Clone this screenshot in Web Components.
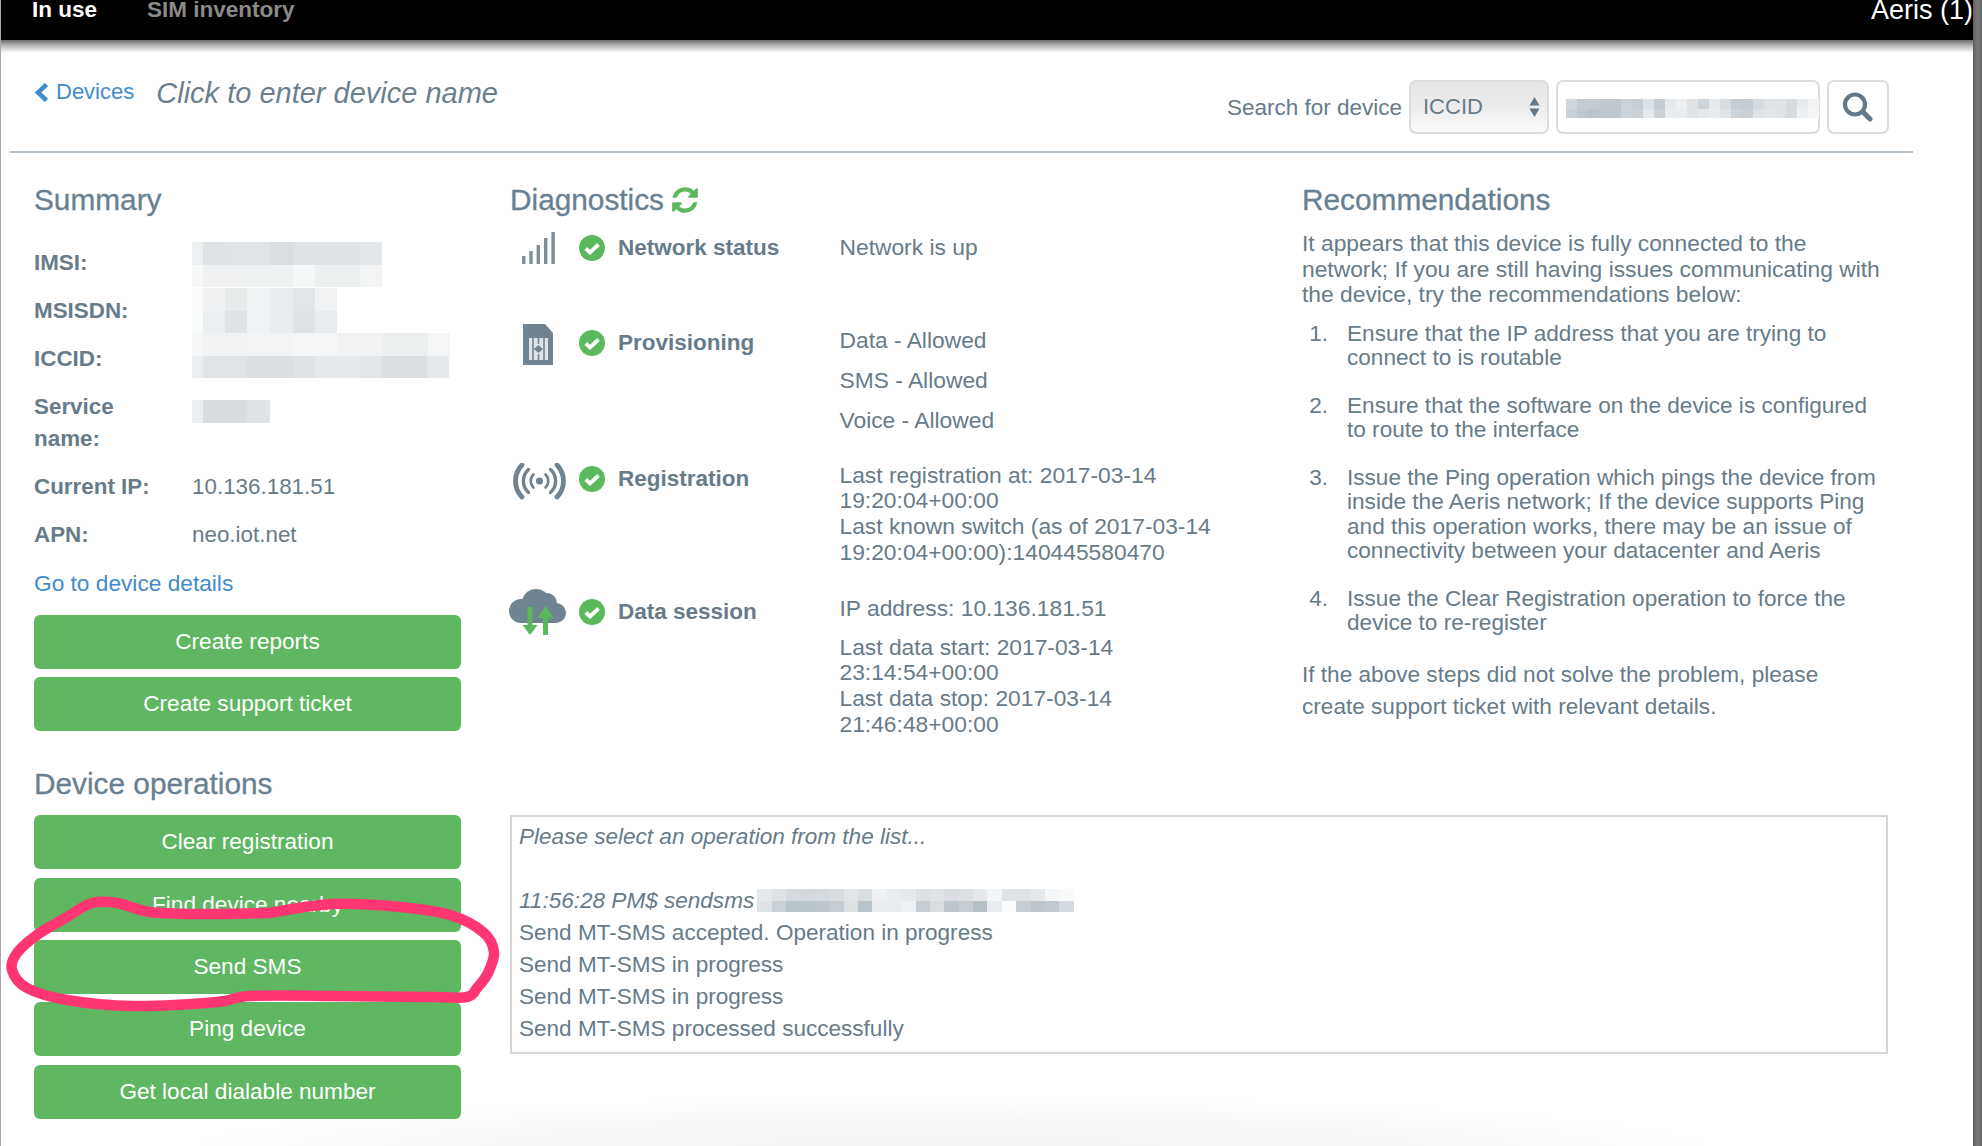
<!DOCTYPE html>
<html>
<head>
<meta charset="utf-8">
<title>Device diagnostics</title>
<style>
  html, body { margin: 0; height: 1146px; overflow: hidden; background: #fff; }
  body { font: 22.600px/32px "Liberation Sans", Arial, sans-serif; color: #677b89; }
</style>
</head>
<body>
<device-page>
  <top-nav slot="nav">
    <span slot="active">In use</span>
    <span slot="link">SIM inventory</span>
    <span slot="account">Aeris (1)</span>
  </top-nav>

  <device-header slot="header"></device-header>

  <summary-panel slot="left">
    <info-row><span slot="label">IMSI:</span><pixel-blur top="-5" h="22.7" data="11:edf0f1 22:dde2e4 45:e0e4e6 23:d9dfe1 67:dfe3e5 22:e4e7e9|11:f7f8f9 44:eef0f1 46:eef1f2 22:f6f7f8 45:eceff0 22:f2f4f5"></pixel-blur></info-row>
    <info-row><span slot="label">MSISDN:</span><pixel-blur top="-7" h="22.5" data="11:fafbfb 22:eef0f2 22:e6eaeb 23:eff1f2 23:e9ecee 22:e2e6e8 22:eff1f2|11:fafbfb 22:ebeef0 22:dfe3e5 23:eff1f2 23:e9ecee 22:dde2e4 22:e9ecee"></pixel-blur></info-row>
    <info-row><span slot="label">ICCID:</span><pixel-blur top="-10" h="22.5" data="11:f5f6f7 44:f0f2f3 46:f1f3f4 45:f4f5f6 45:f0f2f3 45:eceff0 22:f4f5f6|11:ebeef0 44:e0e4e6 46:dadfe2 22:dfe3e5 45:e6e9eb 22:e2e6e8 45:d9dee1 22:e6e9eb"></pixel-blur></info-row>
    <info-row><span slot="label">Service name:</span><pixel-blur top="9" h="23" data="11:eceff0 44:d8dde0 23:dfe3e5"></pixel-blur></info-row>
    <info-row><span slot="label">Current IP:</span>10.136.181.51</info-row>
    <info-row><span slot="label">APN:</span>neo.iot.net</info-row>
    <a slot="link">Go to device details</a>
    <action-button slot="actions">Create reports</action-button>
    <action-button slot="actions">Create support ticket</action-button>
    <span slot="ops-title">Device operations</span>
    <action-button slot="ops">Clear registration</action-button>
    <action-button slot="ops">Find device nearby</action-button>
    <action-button slot="ops">Send SMS</action-button>
    <action-button slot="ops">Ping device</action-button>
    <action-button slot="ops">Get local dialable number</action-button>
  </summary-panel>

  <diagnostics-panel slot="diagnostics">
    <diag-row gap="11" nudge="0.500">
      <svg slot="icon" width="65" height="36" viewBox="0 0 65 36" fill="#7d8f9b">
        <rect x="12" y="25" width="3.4" height="8"/><rect x="19.3" y="20" width="3.4" height="13"/><rect x="26.6" y="14" width="3.4" height="19"/><rect x="34" y="7" width="3.4" height="26"/><rect x="41.4" y="1" width="3.4" height="32"/>
      </svg>
      <span slot="label">Network status</span>
      Network is up
    </diag-row>
    <diag-row gap="60" nudge="3">
      <svg slot="icon" width="65" height="42" viewBox="0 0 65 42">
        <path fill="#6f8390" d="M13 0H35L43 9V41H13Z"/>
        <rect x="19" y="14" width="19" height="22" fill="#dfe4e7"/>
        <path stroke="#6f8390" stroke-width="1.6" d="M23 14V36M28.5 14V20M28.5 30V36M34 14V36"/>
        <path fill="#6f8390" d="M28.5 21L33 25L28.5 29L24 25Z"/>
      </svg>
      <span slot="label">Provisioning</span>
      <div style="margin-bottom:8px">Data - Allowed</div>
      <div style="margin-bottom:8px">SMS - Allowed</div>
      <div>Voice - Allowed</div>
    </diag-row>
    <diag-row gap="27" nudge="0" tight>
      <svg slot="icon" width="65" height="40" viewBox="0 0 65 40" fill="none" stroke="#6f8390" stroke-linecap="round">
        <circle cx="29.5" cy="18" r="3.600" fill="#6f8390" stroke="none"/>
        <path stroke-width="2.600" d="M23.5 11.5A9 9 0 0 0 23.5 24.5M35.5 11.5A9 9 0 0 1 35.5 24.5"/>
        <path stroke-width="3.400" d="M18.500 6.500A15.500 15.500 0 0 0 18.500 29.500M40.500 6.500A15.500 15.500 0 0 1 40.500 29.500"/>
        <path stroke-width="4.800" d="M12 2A23 23 0 0 0 12 34M47 2A23 23 0 0 1 47 34"/>
      </svg>
      <span slot="label">Registration</span>
      Last registration at: 2017-03-14 19:20:04+00:00<br>
      Last known switch (as of 2017-03-14 19:20:04+00:00):140445580470
    </diag-row>
    <diag-row gap="26" nudge="4" tight>
      <svg slot="icon" width="65" height="48" viewBox="0 0 65 48" style="margin:-3px 0 0 -1px">
        <g fill="#6f8390"><circle cx="27" cy="14" r="14"/><circle cx="38" cy="14" r="10"/><circle cx="47" cy="24" r="10"/><circle cx="12" cy="22" r="12"/><rect x="11" y="20" width="36" height="14"/></g>
        <path fill="#5cb85c" d="M18.500 18H23.500V36H28.500L21 46L13.500 36H18.500Z"/>
        <path fill="#5cb85c" d="M36.500 17L44.500 29H39V46H34V29H28.500Z"/>
      </svg>
      <span slot="label">Data session</span>
      <div style="margin-bottom:11px;line-height:32px">IP address: 10.136.181.51</div>
      Last data start: 2017-03-14 23:14:54+00:00<br>
      Last data stop: 2017-03-14 21:46:48+00:00
    </diag-row>
  </diagnostics-panel>

  <recommendations-panel slot="recommendations">
    <p slot="intro">It appears that this device is fully connected to the network; If you are still having issues communicating with the device, try the recommendations below:</p>
    <rec-step n="1.">Ensure that the IP address that you are trying to connect to is routable</rec-step>
    <rec-step n="2.">Ensure that the software on the device is configured to route to the interface</rec-step>
    <rec-step n="3.">Issue the Ping operation which pings the device from inside the Aeris network; If the device supports Ping and this operation works, there may be an issue of connectivity between your datacenter and Aeris</rec-step>
    <rec-step n="4.">Issue the Clear Registration operation to force the device to re-register</rec-step>
    <p slot="outro">If the above steps did not solve the problem, please create support ticket with relevant details.</p>
  </recommendations-panel>

  <ops-console slot="console">
    <i>Please select an operation from the list...</i>
    <div>&nbsp;</div>
    <div style="display:flex;gap:3px"><i>11:56:28 PM$ sendsms</i><pixel-blur top="4" cell="14.400" h="11.500" data="e6e9eb dfe3e6 d5dade d3d9dd d5dade d8dde1 e3e6e9 d9dee1 eef0f2 e9ecee e6e9eb dde1e4 e0e4e6 d9dde1 dde1e4 e6e9eb f4f5f6 dfe3e6 dfe3e6 e6e9eb f5f6f7 f9fafa|dfe3e6 c9d1d6 b9c3ca b9c3ca bcc6cc c5cdd2 dde1e4 b9c3ca e9ecee e9ecee eef0f2 c5cdd2 d9dee1 bcc6cc c5cdd2 b5bfc6 e9ecee fbfbfc c5cdd2 bcc6cc c0c9cf d5dade"></pixel-blur></div>
    <div>Send MT-SMS accepted. Operation in progress</div>
    <div>Send MT-SMS in progress</div>
    <div>Send MT-SMS in progress</div>
    <div>Send MT-SMS processed successfully</div>
  </ops-console>
</device-page>
<pen-annotation></pen-annotation>

<script>
// every element gets its own open shadow root from a small template string
function shadowClass(html, init) {
  const template = document.createElement('template');
  template.innerHTML = html;
  return class extends HTMLElement {
    constructor() {
      super();
      this.attachShadow({ mode: 'open' });
      this.shadowRoot.appendChild(template.content.cloneNode(true));
    }
    connectedCallback() {
      if (init) init(this);
    }
  };
}

customElements.define('device-page', shadowClass(`
  <style>
    :host { display: flex; height: 1146px; box-sizing: border-box; border-left: 1px solid #aaa; }
    #frame { flex: 1; min-width: 0; display: flex; flex-direction: column;
      background: radial-gradient(760px 52px at 950px 1150px, #f3f3f3, #f6f6f6 45%, #fff); }
    #edge { width: 9px; background: linear-gradient(90deg, #5f5f5f, #7a7a7a 50%, #666); }
    #content { display: flex; padding: 27px 0 0 33px; }
    #left { width: 427px; margin-right: 49px; }
    #right { display: flex; flex-direction: column; }
    #columns { display: flex; height: 635px; }
    #diag { width: 792px; }
    #recs { width: 586px; }
  </style>
  <div id="frame">
    <slot name="nav"></slot>
    <slot name="header"></slot>
    <div id="content">
      <div id="left"><slot name="left"></slot></div>
      <div id="right">
        <div id="columns">
          <div id="diag"><slot name="diagnostics"></slot></div>
          <div id="recs"><slot name="recommendations"></slot></div>
        </div>
        <slot name="console"></slot>
      </div>
    </div>
  </div>
  <div id="edge"></div>
`));

customElements.define('top-nav', shadowClass(`
  <style>
    :host { display: flex; position: relative; height: 40px; background: #000; color: #fff; }
    #bar { flex: 1; display: flex; height: 20px; align-items: center; padding-left: 31px; overflow: visible; white-space: nowrap; }
    .tab { font-weight: bold; font-size: 22.500px; line-height: 26px; }
    #muted { color: #8a8a8a; margin-left: 50px; }
    #acct { margin-left: auto; font-size: 27px; padding-right: 0; }
    #shade { position: absolute; left: 0; right: 0; top: 40px; height: 13px; background: linear-gradient(#6c6c6c, #b9b9b9 45%, #fff); }
  </style>
  <div id="bar">
    <span class="tab"><slot name="active"></slot></span>
    <span class="tab" id="muted"><slot name="link"></slot></span>
    <span id="acct"><slot name="account"></slot></span>
  </div>
  <div id="shade"></div>
`));

customElements.define('device-header', shadowClass(`
  <style>
    :host { display: flex; justify-content: space-between; align-items: flex-start; box-sizing: border-box;
      height: 113px; margin: 0 60px 0 9px; padding: 0 24px 0 24px; border-bottom: 2px solid #b4c2cd; }
    #crumbs { display: flex; align-items: center; margin-top: 37px; }
    #back { display: flex; align-items: center; gap: 7px; color: #428bca; font-size: 22px; margin-top: -2px; }
    #name { margin-left: 22px; font-size: 29px; font-style: italic; color: #6b7f8d; }
    #search { display: flex; align-items: center; margin-top: 40px; }
    #search label { font-size: 22.500px; margin-right: 7px; padding-top: 2px; }
    .ctl { box-sizing: border-box; height: 54px; border: 2px solid #dcdcdc; border-radius: 7px; display: flex; align-items: center; }
    #kind { width: 140px; padding: 0 7px 0 12px; justify-content: space-between; font-size: 22px;
      background: linear-gradient(#e6e6e6, #ececec 50%, #fbfbfb); }
    #value { width: 264px; margin-left: 7px; padding-left: 8px; }
    #go { width: 62px; margin-left: 7px; justify-content: center; }
  </style>
  <div id="crumbs">
    <span id="back">
      <svg width="15" height="19" viewBox="0 0 15 19" fill="none" stroke="#428bca" stroke-width="4.500"><path d="M12.500 1.500L4 9.500L12.500 17.500"/></svg>
      Devices
    </span>
    <span id="name">Click to enter device name</span>
  </div>
  <div id="search">
    <label>Search for device</label>
    <div class="ctl" id="kind">ICCID
      <svg width="11" height="20" viewBox="0 0 11 20" fill="#61798a"><path d="M5.500 0L10.500 8.500H.5ZM5.500 20L10.500 11.500H.5Z"/></svg>
    </div>
    <div class="ctl" id="value"><pixel-blur cell="11" h="9.500" top="8" data="d0d7dc c4ccd2 c4ccd2 bfc8ce bfc8ce cdd4d9 c6ced4 dde2e5 c4ccd2 e6e9eb eef0f2 dfe3e6 cdd4d9 e6e9eb d5dbdf c6ced4 c4ccd2 d5dbdf dfe3e6 e0e4e7 d5dbdf e9ecee f3f4f5|c9d1d6 bfc8ce bac4ca bfc8ce bfc8ce cdd4d9 c9d1d6 e6e9eb cbd2d7 eaedef e9ecee e0e4e7 e6e9eb eaedef dfe3e6 cdd4d9 c9d1d6 dfe3e6 e3e6e9 dfe3e6 d5dbdf eef0f2 f5f6f7"></pixel-blur></div>
    <div class="ctl" id="go">
      <svg width="31" height="30" viewBox="0 0 31 30" fill="none" stroke="#61798a" stroke-width="4.200" style="margin-left:-2px"><circle cx="13" cy="12.500" r="10"/><path stroke-width="5" stroke-linecap="round" d="M21 20L28 27"/></svg>
    </div>
  </div>
`));

customElements.define('section-title', shadowClass(`
  <style>
    :host { display: block; font-size: 29.800px; line-height: 40px; color: #688090; -webkit-text-stroke: .3px #688090; }
  </style>
  <slot></slot>
`));

customElements.define('summary-panel', shadowClass(`
  <style>
    :host { display: block; font-size: 22.400px; }
    #rows { display: flex; flex-direction: column; gap: 16px; margin-top: 27px; }
    #link { display: block; margin-top: 16px; color: #428bca; font-size: 22.700px; }
    #actions, #ops { display: flex; flex-direction: column; gap: 8.340px; font-size: 22.600px; }
    #actions { margin-top: 16px; }
    #ops-title { margin-top: 33px; margin-bottom: 11px; }
  </style>
  <section-title>Summary</section-title>
  <div id="rows"><slot></slot></div>
  <div id="link"><slot name="link"></slot></div>
  <div id="actions"><slot name="actions"></slot></div>
  <section-title id="ops-title"><slot name="ops-title"></slot></section-title>
  <div id="ops"><slot name="ops"></slot></div>
`));

customElements.define('info-row', shadowClass(`
  <style>
    :host { display: grid; grid-template-columns: 158px 1fr; }
    #label { font-weight: bold; color: #677b89; padding-right: 30px; }
  </style>
  <div id="label"><slot name="label"></slot></div>
  <div><slot></slot></div>
`));

// mosaic that stands in for the redacted values, data is rows of "width:colour" cells
customElements.define('pixel-blur', shadowClass(`
  <style>
    :host { display: block; height: 32px; }
    #rows { position: relative; }
    .row { display: flex; }
  </style>
  <div id="rows"></div>
`, el => {
  const rows = el.shadowRoot.querySelector('#rows');
  const cell = el.getAttribute('cell') || 11;
  rows.style.top = (el.getAttribute('top') || 0) + 'px';
  el.getAttribute('data').split('|').forEach(line => {
    const row = document.createElement('div');
    row.className = 'row';
    row.style.height = el.getAttribute('h') + 'px';
    line.split(' ').forEach(tok => {
      const parts = tok.split(':');
      const c = document.createElement('div');
      c.style.width = (parts.length > 1 ? parts[0] : cell) + 'px';
      c.style.background = '#' + parts[parts.length - 1];
      row.appendChild(c);
    });
    rows.appendChild(row);
  });
}));

customElements.define('action-button', shadowClass(`
  <style>
    :host { display: flex; align-items: center; justify-content: center; height: 54px; border-radius: 6px;
      background: #5fb761; color: #fff; }
  </style>
  <slot></slot>
`));

customElements.define('diagnostics-panel', shadowClass(`
  <style>
    :host { display: block; font-size: 22.800px; }
  </style>
  <section-title>
    <div style="display:flex;align-items:center;gap:6px">Diagnostics
      <svg width="30" height="30" viewBox="0 0 1792 1792" fill="#5cb85c" stroke="none"><path d="M1639 1056q0 5-1 7-64 268-268 434.500t-478 166.500q-146 0-282.500-55t-243.500-157l-129 129q-19 19-45 19t-45-19-19-45v-448q0-26 19-45t45-19h448q26 0 45 19t19 45-19 45l-137 137q71 66 161 102t187 36q134 0 250-65t186-179q11-17 53-117 8-23 30-23h192q13 0 22.500 9.500t9.500 22.500zm25-800v448q0 26-19 45t-45 19h-448q-26 0-45-19t-19-45 19-45l138-138q-148-137-349-137-134 0-250 65t-186 179q-11 17-53 117-8 23-30 23h-199q-13 0-22.500-9.500t-9.500-22.500v-7q65-268 270-434.500t480-166.500q146 0 284 55.500t245 156.500l130-129q19-19 45-19t45 19 19 45z"/></svg>
    </div>
  </section-title>
  <slot></slot>
`));

customElements.define('diag-row', shadowClass(`
  <style>
    :host { display: grid; grid-template-columns: 69px 39px 221.500px 385px; }
    :host([tight]) #value { line-height: 25.800px; }
    #iconcell { height: 0; line-height: 0; }
    #check { display: block; }
    #label { font-weight: bold; font-size: 22.500px; }
  </style>
  <div id="iconcell"><slot name="icon"></slot></div>
  <div id="checkcell"><svg id="check" width="26" height="26" viewBox="0 0 26 26"><circle cx="13" cy="13" r="13" fill="#5cb85c"/><path d="M6.800 13.500L11 17.500L19.500 9.500" fill="none" stroke="#fff" stroke-width="3.800"/></svg></div>
  <div id="label"><slot name="label"></slot></div>
  <div id="value"><slot></slot></div>
`, el => {
  el.style.marginTop = el.getAttribute('gap') + 'px';
  const nudge = Number(el.getAttribute('nudge'));
  el.shadowRoot.querySelector('#label').style.paddingTop = nudge + 'px';
  el.shadowRoot.querySelector('#checkcell').style.paddingTop = (nudge + 3) + 'px';
}));

customElements.define('recommendations-panel', shadowClass(`
  <style>
    :host { display: block; width: 578px; font-size: 22.800px; }
    #intro { line-height: 25.500px; margin: 11px 0 14px; }
    #steps { display: flex; flex-direction: column; gap: 23.700px; font-size: 22.600px; }
    #outro { margin-top: 23px; font-size: 22.600px; }
    ::slotted(p) { margin: 0; }
  </style>
  <section-title>Recommendations</section-title>
  <div id="intro"><slot name="intro"></slot></div>
  <div id="steps"><slot></slot></div>
  <div id="outro"><slot name="outro"></slot></div>
`));

customElements.define('rec-step', shadowClass(`
  <style>
    :host { display: grid; grid-template-columns: 45px 1fr; line-height: 24.300px; }
    #n { text-align: right; padding-right: 19px; }
  </style>
  <div id="n"></div>
  <div><slot></slot></div>
`, el => { el.shadowRoot.querySelector('#n').textContent = el.getAttribute('n'); }));

customElements.define('ops-console', shadowClass(`
  <style>
    :host { display: block; box-sizing: border-box; width: 1378px; height: 239px; border: 2px solid #d6d6d6; padding: 4px 7px; font-size: 22.550px; }
  </style>
  <slot></slot>
`));

// the hand drawn loop round Send SMS, smoothed through the traced points
const penPoints = [[268,913],[333,904],[400,907],[450,915],[483,932],[494,952],[488,973],[477,988],[467,997],[433,997],[333,996],[250,996],[217,1002],[133,1006],[67,1000],[27,988],[12,970],[17,953],[37,935],[67,917],[92,903],[117,903],[150,912],[200,914],[267,913]];
function penPath(p) {
  let d = 'M' + p[0].join(' ');
  for (let i = 0; i < p.length - 1; i++) {
    const a = p[i - 1] || p[i], b = p[i], c = p[i + 1], e = p[i + 2] || c;
    d += ' C' + (b[0] + (c[0] - a[0]) / 6).toFixed(1) + ' ' + (b[1] + (c[1] - a[1]) / 6).toFixed(1) + ' '
      + (c[0] - (e[0] - b[0]) / 6).toFixed(1) + ' ' + (c[1] - (e[1] - b[1]) / 6).toFixed(1) + ' ' + c.join(' ');
  }
  return d;
}

customElements.define('pen-annotation', shadowClass(`
  <style>
    :host { position: absolute; left: 0; top: 0; pointer-events: none; }
    svg { display: block; }
  </style>
  <svg width="1982" height="1146" viewBox="0 0 1982 1146" fill="none" stroke="#ff3671" stroke-width="10.500" stroke-linecap="round" stroke-linejoin="round">
    <path id="loop"/>
  </svg>
`, el => { el.shadowRoot.querySelector('#loop').setAttribute('d', penPath(penPoints)); }));
</script>
</body>
</html>
